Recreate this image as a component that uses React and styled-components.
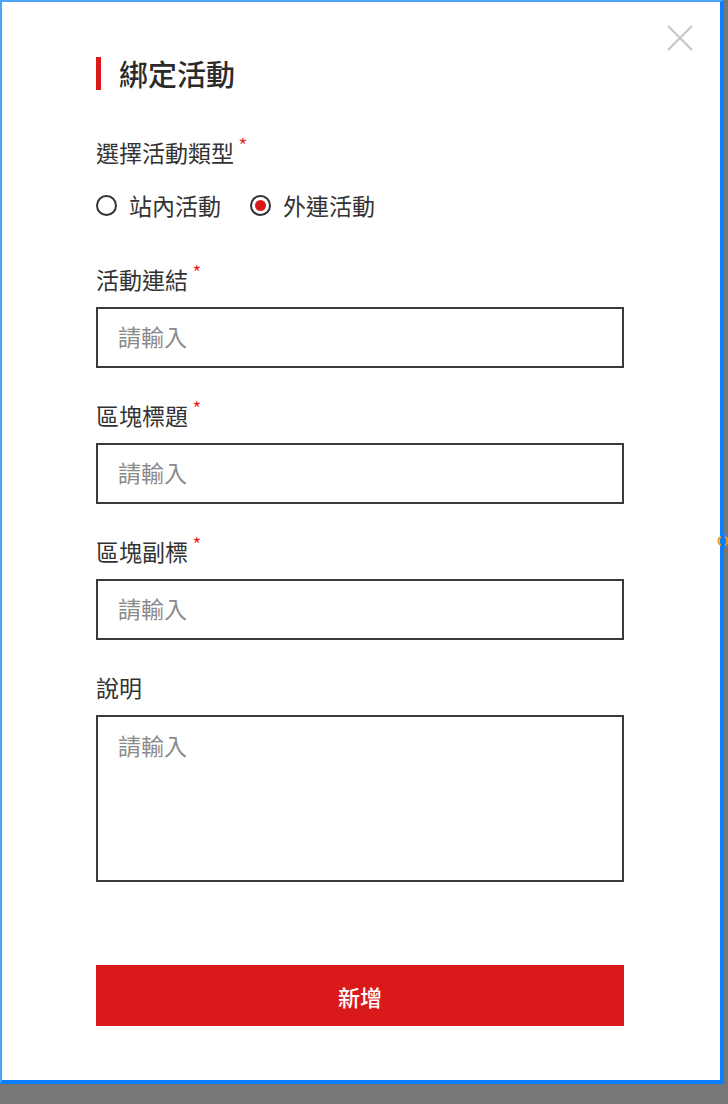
import React, { useState } from 'react'
import styled, { createGlobalStyle } from 'styled-components'

const GlobalStyle = createGlobalStyle`
  html, body {
    margin: 0;
    padding: 0;
    background: #777777;
  }
  * {
    box-sizing: border-box;
  }
`

const FONT = `"Noto Sans CJK TC", "Noto Sans", "Liberation Sans", sans-serif`

const Modal = styled.div`
  position: relative;
  width: 724px;
  height: 1084px;
  background: #fff;
  border-top: 2px solid #4fa3ff;
  border-left: 2px solid #4fa3ff;
  border-right: 4px solid #0b7dff;
  border-bottom: 4px solid #0b7dff;
  padding: 55px 0 0 94px;
  font-family: ${FONT};
  color: #333;
`

const CloseButton = styled.button`
  position: absolute;
  top: 23px;
  right: 27px;
  width: 26px;
  height: 26px;
  padding: 0;
  border: none;
  background: transparent;
  cursor: pointer;
  display: flex;
`

const EdgeHandle = styled.svg`
  position: absolute;
  top: 532px;
  right: -10px;
  width: 14px;
  height: 14px;
`

const Form = styled.div`
  width: 528px;
  display: flex;
  flex-direction: column;
`

const TitleRow = styled.div`
  display: flex;
  align-items: center;
  height: 33px;
  gap: 18px;
  margin-bottom: 49px;
`

const TitleBar = styled.span`
  width: 5px;
  height: 33px;
  background: #da1a1a;
`

const Title = styled.h2`
  margin: 0;
  font-size: 29px;
  font-weight: 500;
  line-height: 33px;
  color: #2b2b2b;
`

const Label = styled.div`
  font-size: 23px;
  line-height: 26px;
  height: 30px;
  color: #333;
  display: flex;
  align-items: flex-start;
`

const Required = styled.span`
  color: #e0191b;
  font-size: 22px;
  font-weight: 300;
  line-height: 18px;
  margin-left: 4px;
  margin-top: -3px;
`

const RadioGroup = styled.div`
  display: flex;
  align-items: center;
  gap: 29px;
  height: 30px;
  margin-top: 21px;
  margin-bottom: 46px;
`

const RadioOption = styled.label`
  display: flex;
  align-items: center;
  gap: 12px;
  font-size: 23px;
  line-height: 26px;
  color: #333;
  cursor: pointer;
`

const RadioCircle = styled.span`
  width: 21px;
  height: 21px;
  border-radius: 50%;
  border: 2px solid #333;
  display: flex;
  align-items: center;
  justify-content: center;

  &::after {
    content: '';
    width: 11px;
    height: 11px;
    border-radius: 50%;
    background: ${p => (p.$checked ? '#da1a1a' : 'transparent')};
  }
`

const Field = styled.div`
  display: flex;
  flex-direction: column;
  gap: 11px;
  margin-bottom: 34px;
`

const Input = styled.input`
  width: 100%;
  height: 61px;
  border: 2px solid #3a3a3a;
  padding: 0 20px 3px;
  font-family: ${FONT};
  font-size: 23px;
  color: #333;
  outline: none;
  background: #fff;

  &::placeholder {
    color: #8a8a8a;
  }
`

const TextArea = styled.textarea`
  width: 100%;
  height: 167px;
  border: 2px solid #3a3a3a;
  padding: 13px 20px;
  font-family: ${FONT};
  font-size: 23px;
  line-height: 30px;
  color: #333;
  outline: none;
  resize: none;
  background: #fff;

  &::placeholder {
    color: #8a8a8a;
  }
`

const SubmitButton = styled.button`
  margin-top: 49px;
  width: 100%;
  height: 61px;
  border: none;
  background: #da1a1a;
  color: #fff;
  font-family: ${FONT};
  font-size: 22px;
  font-weight: 500;
  cursor: pointer;
`

const fields = [
  { label: '活動連結', required: true },
  { label: '區塊標題', required: true },
  { label: '區塊副標', required: true },
]

export default function App() {
  const [type, setType] = useState('external')

  return (
    <>
      <GlobalStyle />
      <Modal>
        <CloseButton aria-label="close">
          <svg width="26" height="26" viewBox="0 0 26 26">
            <path d="M1 1 L25 25 M25 1 L1 25" stroke="#c6c6c6" strokeWidth="2.2" fill="none" />
          </svg>
        </CloseButton>

        <Form>
          <TitleRow>
            <TitleBar />
            <Title>綁定活動</Title>
          </TitleRow>

          <Label>
            選擇活動類型<Required>*</Required>
          </Label>
          <RadioGroup>
            <RadioOption onClick={() => setType('internal')}>
              <RadioCircle $checked={type === 'internal'} />
              站內活動
            </RadioOption>
            <RadioOption onClick={() => setType('external')}>
              <RadioCircle $checked={type === 'external'} />
              外連活動
            </RadioOption>
          </RadioGroup>

          {fields.map(f => (
            <Field key={f.label}>
              <Label>
                {f.label}
                {f.required && <Required>*</Required>}
              </Label>
              <Input placeholder="請輸入" />
            </Field>
          ))}

          <Field>
            <Label>說明</Label>
            <TextArea placeholder="請輸入" />
          </Field>

          <SubmitButton>新增</SubmitButton>
        </Form>

        <EdgeHandle viewBox="0 0 14 14">
          <circle cx="7" cy="7" r="4.5" stroke="#f39a12" strokeWidth="2" fill="none" />
          <rect x="5" y="0" width="4" height="14" fill="#0b7dff" />
        </EdgeHandle>
      </Modal>
    </>
  )
}
